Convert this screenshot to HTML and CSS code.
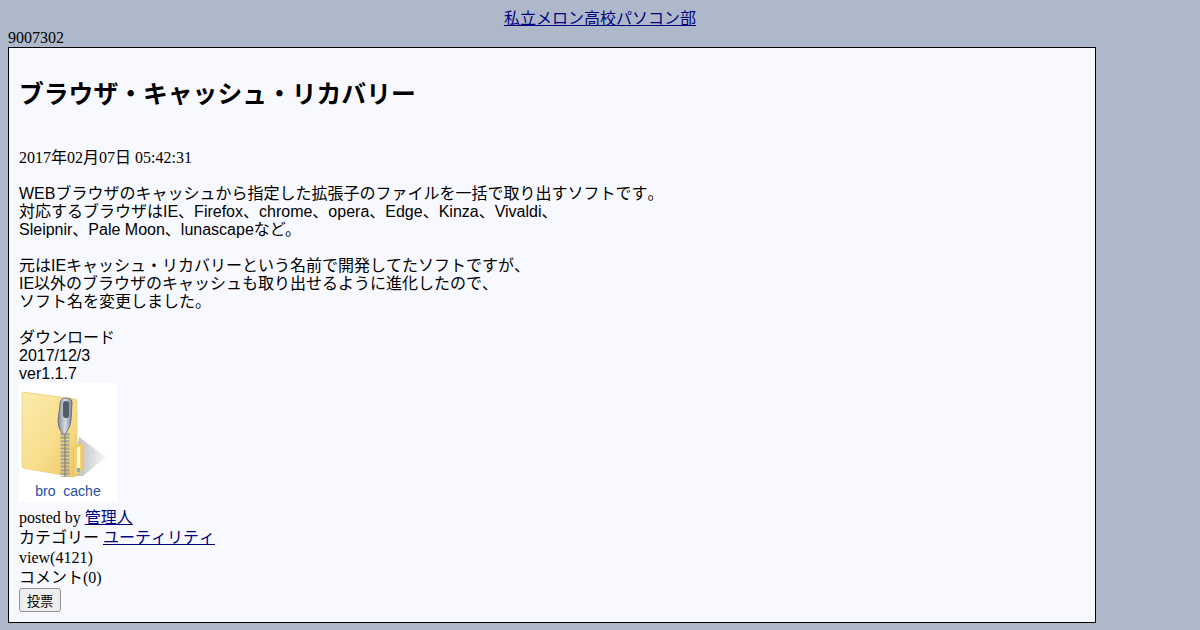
FILE: index.html
```html
<!DOCTYPE html>
<html lang="ja">
<head>
<meta charset="utf-8">
<title>ブラウザ・キャッシュ・リカバリー</title>
<link rel="stylesheet" href="styles.css">
</head>
<body>
<div class="site-title"><a href="#">私立メロン高校パソコン部</a></div>
<div class="counter">9007302</div>
<div class="panel">
  <h2 class="entry-title">ブラウザ・キャッシュ・リカバリー</h2>
  <p class="date">2017年02月07日 05:42:31</p>
  <div class="body-text">WEBブラウザのキャッシュから指定した拡張子のファイルを一括で取り出すソフトです。<br>
<span class="latin">対応するブラウザはIE、Firefox、chrome、opera、Edge、Kinza、Vivaldi、<br>
Sleipnir、Pale Moon、lunascapeなど。</span><br>
<br>
元はIEキャッシュ・リカバリーという名前で開発してたソフトですが、<br>
IE以外のブラウザのキャッシュも取り出せるように進化したので、<br>
ソフト名を変更しました。<br>
<br>
ダウンロード<br>
2017/12/3<br>
ver1.1.7</div>
  <div class="download">
    <svg class="zip" width="98" height="100" viewBox="0 0 98 100" aria-hidden="true">
      <defs>
        <linearGradient id="fold" x1="0" y1="0" x2="1" y2="1">
          <stop offset="0" stop-color="#fbecb0"/>
          <stop offset="0.55" stop-color="#f8de8e"/>
          <stop offset="1" stop-color="#eec766"/>
        </linearGradient>
        <linearGradient id="shade" x1="0" y1="0" x2="1" y2="0">
          <stop offset="0" stop-color="#b5b5b5"/>
          <stop offset="1" stop-color="#f6f6f6"/>
        </linearGradient>
        <linearGradient id="pull" x1="0" y1="0" x2="1" y2="0">
          <stop offset="0" stop-color="#7f8998"/>
          <stop offset="0.5" stop-color="#d8dde5"/>
          <stop offset="1" stop-color="#78818e"/>
        </linearGradient>
      </defs>
      <path d="M60 54 L87 74 L64 93 L52 93Z" fill="url(#shade)"/>
      <path d="M3 9 L56 16 Q58 16 58 19 L58 92 L54 94 L4 85 Q3 85 3 83Z" fill="url(#fold)" stroke="#e6c262" stroke-width="0.6"/>
      <path d="M54 66 L60 61 Q64 59 64 63 L64 86 L55 94Z" fill="#f3d070" stroke="#dcb452" stroke-width="0.5"/>
      <rect x="58" y="64" width="3" height="25" fill="#fdf8cf"/>
      <rect x="58" y="85" width="3" height="4" fill="#76b0cf"/>
      <path d="M46 50 V94" stroke="#a8a894" stroke-width="9" stroke-dasharray="2.4 1.2"/>
      <path d="M46 50 V94" stroke="#77786c" stroke-width="1"/>
      <path d="M47 15 Q54 15 53 21 L52 37 Q52 43 47 50 Q45 53 43 50 Q39 45 39 38 L41 21 Q41 15 47 15Z" fill="url(#pull)" stroke="#5c6470" stroke-width="0.8"/>
      <rect x="44" y="18" width="6" height="17" rx="3" fill="#525c68"/>
    </svg>
    <span class="zip-label">bro&nbsp; cache</span>
  </div>
  <div class="meta">posted by <a href="#">管理人</a></div>
  <div class="meta">カテゴリー <a href="#">ユーティリティ</a></div>
  <div class="meta">view(4121)</div>
  <div class="meta">コメント(0)</div>
  <button class="vote" type="button">投票</button>
</div>
</body>
</html>
```
FILE: styles.css
```css
body {
  margin: 8px;
  background: #adb9ca;
  color: #000;
  font-family: "Liberation Serif", "Noto Sans CJK JP", serif;
  font-size: 16px;
}
a {
  color: #000080;
}
.site-title {
  text-align: center;
  line-height: 21px;
  font-kerning: none;
}
.counter {
  line-height: 18px;
}
.panel {
  width: 1066px;
  padding: 10px;
  background: #f8f9ff;
  border: 1px solid #000;
}
.entry-title {
  margin: 22px 0 39px;
  font-family: "Liberation Sans", "Noto Sans CJK JP", sans-serif;
  font-size: 24.8px;
  line-height: 30px;
  font-weight: bold;
  font-kerning: none;
}
.date {
  margin: 0 0 18px;
  line-height: 18px;
}
.body-text {
  font-family: "Liberation Sans", "Noto Sans CJK JP", sans-serif;
  line-height: 18px;
  font-kerning: none;
}
.latin {
  font-kerning: normal;
}
.download {
  display: flex;
  flex-direction: column;
  align-items: center;
  width: 98px;
  height: 119px;
  margin-bottom: 6px;
  background: #fff;
}
.zip {
  flex: none;
}
.zip-label {
  font-family: "Liberation Sans", sans-serif;
  font-size: 14px;
  line-height: 16px;
  color: #1f4fa3;
}
.meta {
  line-height: 20px;
  font-kerning: none;
}
.vote {
  display: block;
  width: 42px;
  height: 24px;
  padding: 0;
  background: #efefef;
  border: 1px solid #8f8f8f;
  border-radius: 3px;
  font-family: "Liberation Sans", "Noto Sans CJK JP", sans-serif;
  font-size: 13.33px;
  color: #000;
}
```
